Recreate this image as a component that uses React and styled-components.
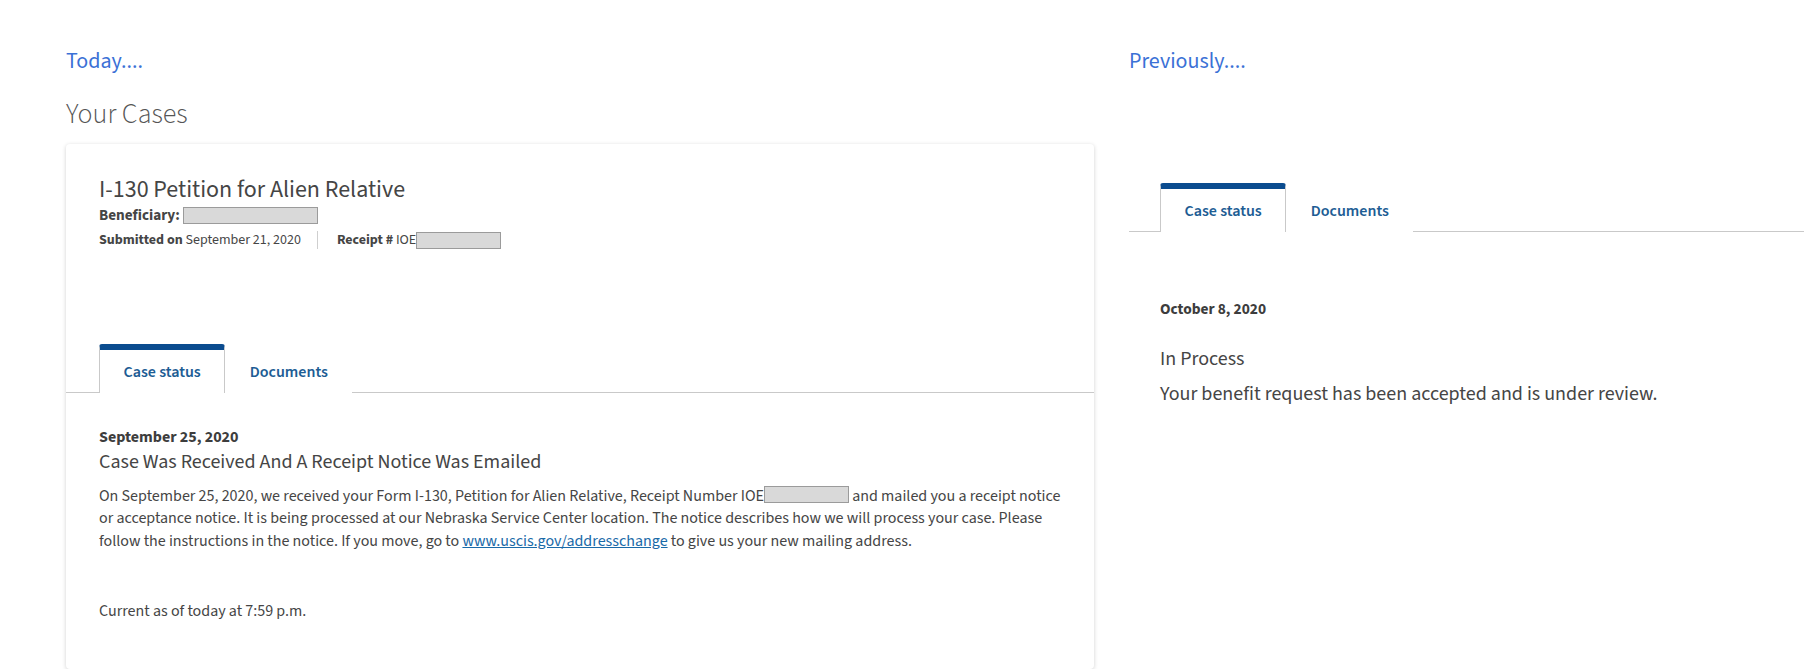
import React from "react";
import styled, { createGlobalStyle } from "styled-components";

const GlobalStyle = createGlobalStyle`
  html, body { margin: 0; padding: 0; background: #ffffff; }
  body {
    font-family: "Source Sans 3", "Source Sans Pro", Lato, "Liberation Sans", sans-serif;
    color: #454545;
  }
`;

const Page = styled.main`
  display: flex;
  align-items: flex-start;
  gap: 35px;
  padding: 47px 0 0 66px;
`;

const LeftColumn = styled.section`
  flex: none;
  width: 1028px;
`;

const RightColumn = styled.section`
  flex: 1;
  min-width: 0;
`;

const Lead = styled.h2`
  margin: 0;
  font-size: 22px;
  line-height: 28px;
  font-weight: 400;
  color: #3b71d6;
`;

const SectionTitle = styled.h1`
  margin: 22px 0 13px;
  font-size: 28px;
  line-height: 34px;
  font-weight: 300;
  color: #555555;
`;

const Card = styled.article`
  background: #ffffff;
  border-radius: 4px;
  box-shadow: 0 1px 4px rgba(0, 0, 0, 0.18);
  padding: 32px 0 46px;
`;

const CardHeader = styled.header`
  padding: 0 33px 95px;
`;

const CardTitle = styled.h3`
  margin: 0;
  font-size: 24px;
  line-height: 28px;
  font-weight: 400;
  color: #454545;
`;

const Beneficiary = styled.div`
  display: flex;
  align-items: center;
  gap: 3px;
  font-size: 15.2px;
  line-height: 22px;
  font-weight: 700;
  color: #454545;
`;

const MetaRow = styled.div`
  display: flex;
  align-items: center;
  margin-top: 5px;
  font-size: 14px;
  line-height: 18px;
  color: #454545;
`;

const MetaItem = styled.span`
  display: inline-flex;
  align-items: center;
  height: 18px;
  padding: ${(p) => (p.$divided ? "0 0 0 19px" : "0 16px 0 0")};
  border-left: ${(p) => (p.$divided ? "1px solid #cfcfcf" : "none")};
  white-space: nowrap;
`;

const Strong = styled.strong`
  font-weight: 700;
`;

const Redacted = styled.span`
  display: inline-block;
  box-sizing: border-box;
  width: ${(p) => p.$w}px;
  height: ${(p) => p.$h}px;
  background: #d9d9d9;
  border: 1px solid #9b9b9b;
  vertical-align: ${(p) => p.$valign || "middle"};
`;

const TabList = styled.div`
  display: flex;
  padding-left: ${(p) => p.$inset}px;
  margin-top: ${(p) => p.$top || 0}px;
  border-bottom: 1px solid #c9c9c9;
`;

const Tab = styled.button`
  box-sizing: border-box;
  height: 49px;
  margin-bottom: -1px;
  padding: 0 23.5px;
  font-family: inherit;
  font-size: 16px;
  font-weight: 600;
  color: #1d5d94;
  background: #ffffff;
  border: 1px solid ${(p) => (p.$active ? "#c9c9c9" : "transparent")};
  border-top: 6px solid ${(p) => (p.$active ? "#0b4c8f" : "transparent")};
  border-bottom: none;
  border-radius: 3px 3px 0 0;
  cursor: pointer;
`;

const Panel = styled.div`
  padding: ${(p) => p.$pad};
`;

const StatusDate = styled.p`
  margin: 0;
  font-size: ${(p) => p.$size}px;
  line-height: ${(p) => p.$lh}px;
  font-weight: 700;
  color: #3d3d3d;
`;

const StatusTitle = styled.h4`
  margin: ${(p) => p.$mt}px 0 0;
  font-size: 20px;
  line-height: ${(p) => p.$lh}px;
  font-weight: 400;
  color: #454545;
`;

const Body = styled.p`
  margin: ${(p) => p.$mt}px 0 0;
  font-size: ${(p) => p.$size}px;
  line-height: ${(p) => p.$lh}px;
  color: #454545;
`;

const Link = styled.a`
  color: #1a6aa8;
  text-decoration: underline;
`;

function Tabs({ inset, top }) {
  return (
    <TabList $inset={inset} $top={top}>
      <Tab $active>Case status</Tab>
      <Tab>Documents</Tab>
    </TabList>
  );
}

export default function App() {
  return (
    <>
      <GlobalStyle />
      <Page>
        <LeftColumn>
          <Lead>Today....</Lead>
          <SectionTitle>Your Cases</SectionTitle>
          <Card>
            <CardHeader>
              <CardTitle>I-130 Petition for Alien Relative</CardTitle>
              <Beneficiary>
                Beneficiary: <Redacted $w={135} $h={17} />
              </Beneficiary>
              <MetaRow>
                <MetaItem>
                  <Strong>Submitted on</Strong>&nbsp;September 21, 2020
                </MetaItem>
                <MetaItem $divided>
                  <Strong>Receipt #</Strong>&nbsp;IOE
                  <Redacted $w={85} $h={17} />
                </MetaItem>
              </MetaRow>
            </CardHeader>
            <Tabs inset={33} />
            <Panel $pad="33px 33px 0">
              <StatusDate $size={16} $lh={22}>
                September 25, 2020
              </StatusDate>
              <StatusTitle $mt={0} $lh={28}>
                Case Was Received And A Receipt Notice Was Emailed
              </StatusTitle>
              <Body $mt={8.5} $size={16} $lh={22.5}>
                On September 25, 2020, we received your Form I-130, Petition for Alien
                Relative, Receipt Number IOE
                <Redacted $w={85} $h={17} $valign="-2px" /> and mailed you a receipt
                notice or acceptance notice. It is being processed at our Nebraska
                Service Center location. The notice describes how we will process your
                case. Please follow the instructions in the notice. If you move, go to{" "}
                <Link href="#">www.uscis.gov/addresschange</Link> to give us your new
                mailing address.
              </Body>
              <Body $mt={48} $size={16} $lh={22.5}>
                Current as of today at 7:59 p.m.
              </Body>
            </Panel>
          </Card>
        </LeftColumn>
        <RightColumn>
          <Lead>Previously....</Lead>
          <Tabs inset={31} top={108} />
          <Panel $pad="66.5px 31px">
            <StatusDate $size={15.4} $lh={20}>
              October 8, 2020
            </StatusDate>
            <StatusTitle $mt={27.3} $lh={26}>
              In Process
            </StatusTitle>
            <Body $mt={9} $size={20} $lh={26}>
              Your benefit request has been accepted and is under review.
            </Body>
          </Panel>
        </RightColumn>
      </Page>
    </>
  );
}
